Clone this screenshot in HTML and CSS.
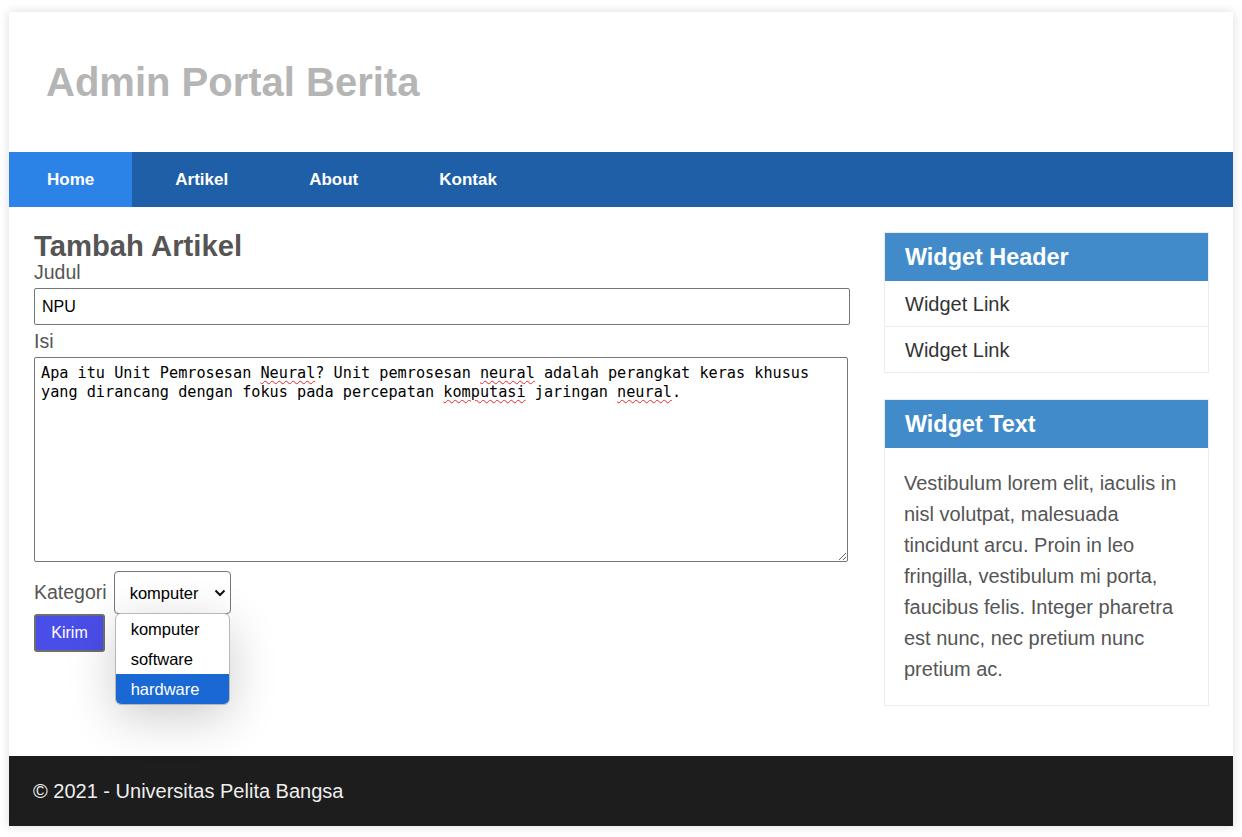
FILE: index.html
```html
<!DOCTYPE html>
<html lang="id">
<head>
<meta charset="utf-8">
<title>Admin Portal Berita</title>
<link rel="stylesheet" href="styles.css">
</head>
<body>
<div class="container">
  <header class="site-header">
    <h1 class="site-title">Admin Portal Berita</h1>
  </header>
  <nav class="nav">
    <a class="nav-item active" href="#">Home</a>
    <a class="nav-item" href="#">Artikel</a>
    <a class="nav-item" href="#">About</a>
    <a class="nav-item" href="#">Kontak</a>
  </nav>
  <div class="content">
    <main class="main">
      <h2 class="page-title">Tambah Artikel</h2>
      <form class="form">
        <label class="field-label" for="judul">Judul</label>
        <input class="text-input" id="judul" type="text" value="NPU">
        <label class="field-label">Isi</label>
        <div class="textarea" role="textbox">Apa itu Unit Pemrosesan <span class="spell">Neural</span>? Unit pemrosesan <span class="spell">neural</span> adalah perangkat keras khusus yang dirancang dengan fokus pada percepatan <span class="spell">komputasi</span> jaringan <span class="spell">neural</span>.</div>
        <div class="category-row">
          <label class="field-label inline" for="kategori">Kategori</label>
          <div class="select-wrap">
            <select class="select" id="kategori">
              <option>komputer</option>
              <option>software</option>
              <option>hardware</option>
            </select>
            <svg class="chevron" width="12" height="8" viewBox="0 0 12 8"><path d="M1.5 1.5 L6 6 L10.5 1.5" fill="none" stroke="#111" stroke-width="2"/></svg>
            <ul class="dropdown">
              <li class="dropdown-item">komputer</li>
              <li class="dropdown-item">software</li>
              <li class="dropdown-item selected">hardware</li>
            </ul>
          </div>
        </div>
        <button class="btn" type="button">Kirim</button>
      </form>
    </main>
    <aside class="sidebar">
      <div class="widget">
        <h3 class="widget-header">Widget Header</h3>
        <a class="widget-link" href="#">Widget Link</a>
        <a class="widget-link" href="#">Widget Link</a>
      </div>
      <div class="widget widget-second">
        <h3 class="widget-header">Widget Text</h3>
        <p class="widget-text">Vestibulum lorem elit, iaculis in nisl volutpat, malesuada tincidunt arcu. Proin in leo fringilla, vestibulum mi porta, faucibus felis. Integer pharetra est nunc, nec pretium nunc pretium ac.</p>
      </div>
    </aside>
  </div>
  <footer class="footer">© 2021 - Universitas Pelita Bangsa</footer>
</div>
</body>
</html>
```
FILE: styles.css
```css
* { box-sizing: border-box; }
html, body { margin: 0; padding: 0; background: #fff; }
body {
  font-family: "Liberation Sans", Arial, sans-serif;
  font-size: 20px;
  color: #555;
}
.container {
  margin: 12px 9px 11px 9px;
  background: #fff;
  box-shadow: 0 0 10px rgba(0, 0, 0, 0.14);
}
.site-header {
  height: 140px;
  display: flex;
  align-items: center;
  padding-left: 37px;
}
.site-title {
  margin: 0;
  font-size: 40px;
  font-weight: bold;
  color: #b5b5b5;
}
.nav {
  display: flex;
  gap: 5px;
  height: 55px;
  background: #1f5fa8;
}
.nav-item {
  display: block;
  padding: 0 38px;
  line-height: 55px;
  font-size: 17px;
  font-weight: bold;
  color: #fff;
  text-decoration: none;
}
.nav-item.active { background: #2b83e7; }
.content {
  display: grid;
  grid-template-columns: 816px 325px;
  column-gap: 34px;
  align-items: start;
  padding: 24px 24px 50px 25px;
}
.page-title {
  margin: 0;
  font-size: 29.25px;
  line-height: 30px;
  font-weight: bold;
  color: #555;
}
.form { display: block; }
.field-label {
  display: block;
  font-size: 19.5px;
  color: #555;
  margin-bottom: 4px;
}
.field-label.inline { margin: 0; }
.text-input {
  display: block;
  width: 816px;
  height: 37px;
  margin: 0 0 5px 0;
  padding: 0 7px;
  border: 1px solid #767676;
  border-radius: 2px;
  font-family: "Liberation Sans", Arial, sans-serif;
  font-size: 16px;
  color: #000;
  background: #fff;
}
.textarea {
  width: 814px;
  height: 205px;
  padding: 6px 6px;
  border: 1px solid #767676;
  border-radius: 2px;
  font-family: "DejaVu Sans Mono", monospace;
  font-size: 15.2px;
  line-height: 19.4px;
  color: #000;
  background: #fff;
  overflow: auto;
  resize: both;
  white-space: pre-wrap;
}
.spell {
  text-decoration: underline wavy #e8262a;
  text-decoration-thickness: 1px;
  text-underline-offset: 2px;
}
.category-row {
  display: flex;
  align-items: center;
  gap: 7px;
  margin-top: 9px;
}
.select-wrap {
  position: relative;
  width: 117px;
  height: 43px;
}
.select {
  appearance: none;
  -webkit-appearance: none;
  width: 117px;
  height: 43px;
  padding: 0 0 0 15px;
  border: 1px solid #767676;
  border-radius: 4px;
  background: #fff;
  font-family: "Liberation Sans", Arial, sans-serif;
  font-size: 16.5px;
  color: #000;
}
.chevron {
  position: absolute;
  right: 5px;
  top: 18px;
  pointer-events: none;
}
.dropdown {
  position: absolute;
  top: 42px;
  left: 1px;
  width: 115px;
  margin: 0;
  padding: 0;
  list-style: none;
  background: #fff;
  border: 1px solid #b8b8b8;
  border-radius: 6px;
  overflow: hidden;
  box-shadow: 0 12px 48px rgba(0, 0, 0, 0.2);
  z-index: 5;
}
.dropdown-item {
  height: 30px;
  line-height: 30px;
  padding-left: 15px;
  font-size: 16.5px;
  color: #000;
}
.dropdown-item.selected {
  background: #1a68d3;
  color: #fff;
}
.btn {
  display: block;
  margin-top: 0;
  width: 71px;
  height: 38px;
  padding: 0;
  border: 2px solid #6e6e6e;
  border-radius: 3px;
  background: #4a4ee8;
  color: #fff;
  font-family: "Liberation Sans", Arial, sans-serif;
  font-size: 16px;
}
.sidebar {
  padding-top: 1px;
}
.widget {
  border: 1px solid #ececec;
  background: #fff;
}
.widget-second { margin-top: 26px; }
.widget-header {
  margin: 0;
  height: 48px;
  padding: 0 20px;
  line-height: 48px;
  font-size: 23.4px;
  font-weight: bold;
  color: #fff;
  background: #428bca;
}
.widget-link {
  display: block;
  height: 46px;
  padding: 0 20px;
  line-height: 46px;
  font-size: 20px;
  color: #333;
  text-decoration: none;
  border-bottom: 1px solid #ececec;
}
.widget-link:last-child { border-bottom: none; height: 45px; }
.widget-text {
  margin: 0;
  padding: 20px 20px 20px 19px;
  font-size: 20px;
  line-height: 31px;
  color: #555;
}
.footer {
  height: 70px;
  line-height: 70px;
  padding-left: 24px;
  background: #1d1d1d;
  color: #eee;
  font-size: 20px;
}
```
